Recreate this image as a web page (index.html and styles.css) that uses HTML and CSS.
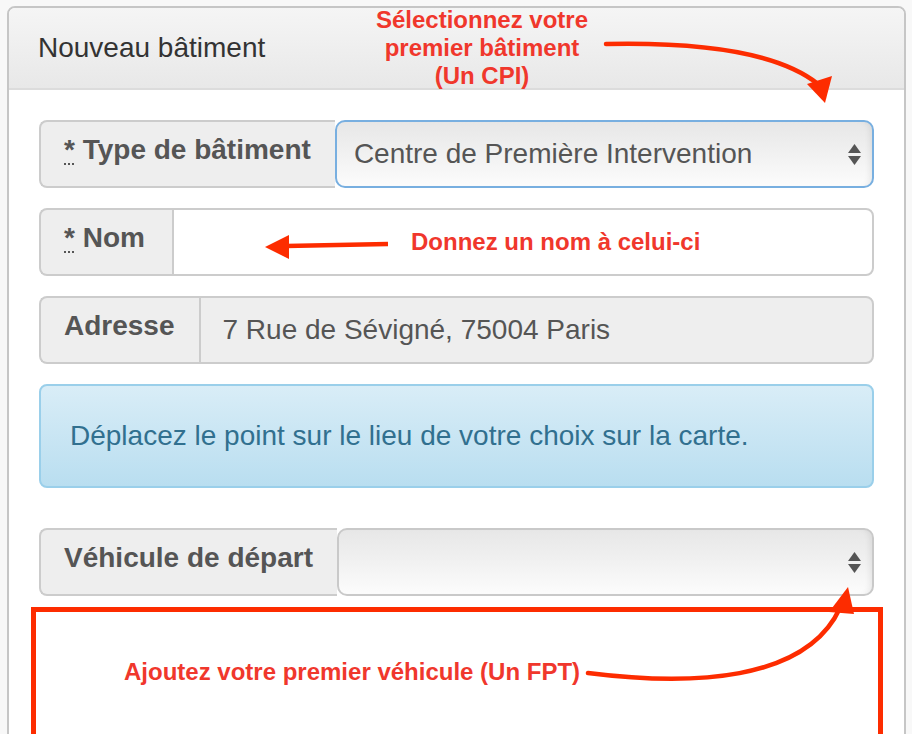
FILE: index.html
```html
<!DOCTYPE html>
<html lang="fr">
<head>
<meta charset="utf-8">
<title>Nouveau bâtiment</title>
<link rel="stylesheet" href="styles.css">
</head>
<body>
<div class="panel">
  <div class="panel-heading">Nouveau bâtiment</div>
  <div class="panel-body">
    <div class="input-group">
      <span class="addon"><abbr class="req" title="requis">*</abbr>&nbsp;Type de bâtiment</span>
      <div class="select select-focus">
        <span class="select-value">Centre de Première Intervention</span>
        <svg class="updown" width="13" height="21" viewBox="0 0 13 21"><polygon points="6.5,0 13,9 0,9" fill="#555"/><polygon points="0,12 13,12 6.5,21" fill="#555"/></svg>
      </div>
    </div>
    <div class="input-group">
      <span class="addon addon-nom"><abbr class="req" title="requis">*</abbr>&nbsp;Nom</span>
      <input class="input" type="text" value="">
    </div>
    <div class="input-group">
      <span class="addon">Adresse</span>
      <input class="input input-readonly" type="text" value="7 Rue de Sévigné, 75004 Paris" readonly>
    </div>
    <div class="alert">Déplacez le point sur le lieu de votre choix sur la carte.</div>
    <div class="input-group input-group-last">
      <span class="addon">Véhicule de départ</span>
      <div class="select">
        <span class="select-value"></span>
        <svg class="updown" width="13" height="21" viewBox="0 0 13 21"><polygon points="6.5,0 13,9 0,9" fill="#555"/><polygon points="0,12 13,12 6.5,21" fill="#555"/></svg>
      </div>
    </div>
    <div class="callout">Ajoutez votre premier véhicule (Un FPT)</div>
  </div>
</div>

<div class="annotations">
  <div class="note note-top">Sélectionnez votre<br>premier bâtiment<br>(Un CPI)</div>
  <div class="note note-nom">Donnez un nom à celui-ci</div>
  <svg class="arrows" width="912" height="734" viewBox="0 0 912 734">
    <path d="M606,44 C700,42 778,52 818,84" fill="none" stroke="#fd2c00" stroke-width="4.5" stroke-linecap="round"/>
    <polygon points="807,84 832,76 825,103" fill="#fd2c00"/>
    <path d="M388,244 L286,246" fill="none" stroke="#fd2c00" stroke-width="4.5"/>
    <polygon points="265,247 289,235 289,259" fill="#fd2c00"/>
    <path d="M588,673 C690,686 806,682 840,608" fill="none" stroke="#fd2c00" stroke-width="4.5" stroke-linecap="round"/>
    <polygon points="848,587 829,612 854,614" fill="#fd2c00"/>
  </svg>
</div>
</body>
</html>
```

FILE: styles.css
```css
html, body {
  margin: 0;
  height: 100%;
  overflow: hidden;
}

body {
  position: relative;
  background: #f8f8f8;
  font-family: "Liberation Sans", Arial, sans-serif;
}

.panel {
  box-sizing: border-box;
  width: 899px;
  height: 780px;
  margin: 6px 0 0 7px;
  border: 2px solid #c6c6c6;
  border-radius: 8px;
  background: #fff;
}

.panel-heading {
  padding: 20px 29px;
  font-size: 28px;
  line-height: 40px;
  color: #333;
  background: linear-gradient(to bottom, #f5f5f5, #e8e8e8);
  border-bottom: 2px solid #dcdcdc;
  border-radius: 6px 6px 0 0;
}

.panel-body {
  padding: 30px 30px 0;
}

.input-group {
  display: flex;
  height: 68px;
  margin-bottom: 20px;
}

.input-group-last {
  margin-bottom: 11px;
}

.addon {
  display: flex;
  align-items: center;
  box-sizing: border-box;
  padding: 0 24px 9px 23px;
  background: #eee;
  border: 2px solid #ccc;
  border-right: 0;
  border-radius: 8px 0 0 8px;
  font-size: 28px;
  font-weight: bold;
  color: #555;
  white-space: nowrap;
}

.addon-nom {
  padding-right: 27px;
}

.req {
  text-decoration: underline dotted;
  text-decoration-thickness: 2px;
  text-underline-offset: 5px;
}

.input {
  flex: 1;
  min-width: 0;
  box-sizing: border-box;
  height: 68px;
  margin: 0;
  padding: 0 22px;
  border: 2px solid #ccc;
  border-radius: 0 8px 8px 0;
  background: #fff;
  font-family: "Liberation Sans", Arial, sans-serif;
  font-size: 28px;
  color: #555;
  outline: none;
}

.input-readonly {
  background: #eee;
}

.select {
  flex: 1;
  display: flex;
  align-items: center;
  box-sizing: border-box;
  padding: 0 11px 0 17px;
  border: 2px solid #c9c9c9;
  border-radius: 10px;
  background: linear-gradient(to bottom, #e7e7e7 0%, #f2f2f2 55%, #fcfcfc 100%);
  box-shadow: inset -6px 0 6px -4px rgba(0, 0, 0, 0.08);
  font-size: 28px;
  color: #555;
}

.select-focus {
  border-color: #78afe0;
}

.select-value {
  flex: 1;
  white-space: nowrap;
}

.updown {
  flex: none;
  display: block;
}

.alert {
  margin-bottom: 40px;
  padding: 30px 29px;
  border: 2px solid #9acfea;
  border-radius: 8px;
  background: linear-gradient(to bottom, #d9edf7, #b9def0);
  color: #31708f;
  font-size: 28px;
  line-height: 40px;
}

.callout {
  height: 200px;
  margin: 0 -9px 0 -8px;
  padding: 46px 0 0 88px;
  border: 5px solid #fd2c00;
  background: #fff;
  color: #f0372c;
  font-size: 24px;
  font-weight: bold;
  line-height: 28px;
}

.annotations {
  position: absolute;
  top: 0;
  left: 0;
  width: 912px;
  height: 734px;
  pointer-events: none;
}

.note {
  position: absolute;
  color: #f0372c;
  font-size: 24px;
  font-weight: bold;
  line-height: 28px;
  white-space: nowrap;
}

.note-top {
  top: 6px;
  left: 332px;
  width: 300px;
  text-align: center;
}

.note-nom {
  top: 228px;
  left: 411px;
}

.arrows {
  position: absolute;
  top: 0;
  left: 0;
}
```
